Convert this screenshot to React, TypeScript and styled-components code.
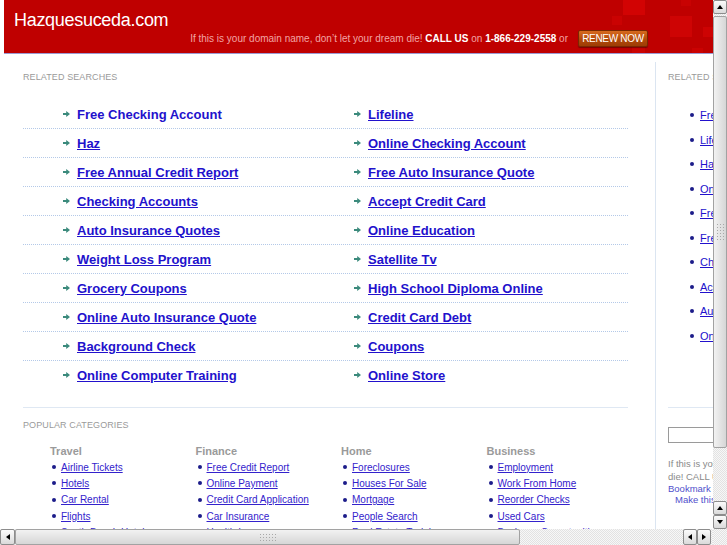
import styled, { createGlobalStyle, css } from 'styled-components';

const GlobalStyle = createGlobalStyle`
  html, body {
    margin: 0;
    padding: 0;
    overflow: hidden;
    background: #fff;
  }
  body {
    font-family: "Liberation Sans", Arial, sans-serif;
  }
`;

const searches = [
  ['Free Checking Account', 'Lifeline'],
  ['Haz', 'Online Checking Account'],
  ['Free Annual Credit Report', 'Free Auto Insurance Quote'],
  ['Checking Accounts', 'Accept Credit Card'],
  ['Auto Insurance Quotes', 'Online Education'],
  ['Weight Loss Program', 'Satellite Tv'],
  ['Grocery Coupons', 'High School Diploma Online'],
  ['Online Auto Insurance Quote', 'Credit Card Debt'],
  ['Background Check', 'Coupons'],
  ['Online Computer Training', 'Online Store'],
];

const sideLinks = [
  'Free Checking Account',
  'Lifeline',
  'Haz',
  'Online Checking Account',
  'Free Annual Credit Report',
  'Free Auto Insurance Quote',
  'Checking Accounts',
  'Accept Credit Card',
  'Auto Insurance Quotes',
  'Online Education',
];

const categories = [
  { title: 'Travel', links: ['Airline Tickets', 'Hotels', 'Car Rental', 'Flights', 'South Beach Hotels'] },
  { title: 'Finance', links: ['Free Credit Report', 'Online Payment', 'Credit Card Application', 'Car Insurance', 'Health Insurance'] },
  { title: 'Home', links: ['Foreclosures', 'Houses For Sale', 'Mortgage', 'People Search', 'Real Estate Training'] },
  { title: 'Business', links: ['Employment', 'Work From Home', 'Reorder Checks', 'Used Cars', 'Business Opportunities'] },
];

const Arrow = () => (
  <svg width="7" height="6" viewBox="0 0 7 6" aria-hidden="true">
    <polygon points="0,2 3.2,2 3.2,0 7,3 3.2,6 3.2,4 0,4" fill="#3b8a7c" />
  </svg>
);

const App = () => (
  <>
    <GlobalStyle />
    <Screen>
      <Page>
        <Header>
          <Decor width="120" height="53" viewBox="0 0 120 53" aria-hidden="true">
            <rect x="30" y="0" width="22" height="15" fill="#d20303" />
            <rect x="19" y="16" width="10" height="9" fill="#ca0202" />
            <rect x="77" y="16" width="22" height="21" fill="#ce0404" />
            <rect x="110" y="27" width="10" height="10" fill="#cd0303" />
            <rect x="39" y="43" width="13" height="10" fill="#ca0303" />
            <rect x="99" y="48" width="11" height="5" fill="#ca0202" />
            <rect x="88" y="0" width="10" height="6" fill="#c80202" />
          </Decor>
          <Title>Hazquesuceda.com</Title>
          <Promo>
            <Tagline>
              If this is your domain name, don’t let your dream die! <b>CALL US</b> on <b>1-866-229-2558</b> or
            </Tagline>
            <Renew>RENEW NOW</Renew>
          </Promo>
        </Header>

        <Body>
          <Main>
            <Heading>Related Searches</Heading>
            <Rows>
              {searches.map((pair, r) => (
                <Row key={pair[0]}>
                  {pair.map((text, c) => (
                    <Cell key={text}>
                      <Arrow />
                      <BigLink $plain={r === 0 && c === 0}>{text}</BigLink>
                    </Cell>
                  ))}
                </Row>
              ))}
            </Rows>
            <Popular>
              <Heading>Popular Categories</Heading>
              <CatGrid>
                {categories.map((cat) => (
                  <div key={cat.title}>
                    <CatTitle>{cat.title}</CatTitle>
                    <CatList>
                      {cat.links.map((l) => (
                        <CatItem key={l}>
                          <Dot />
                          <SmallLink>{l}</SmallLink>
                        </CatItem>
                      ))}
                    </CatList>
                  </div>
                ))}
              </CatGrid>
            </Popular>
          </Main>

          <Separator />

          <Side>
            <Heading>Related Searches</Heading>
            <SideList>
              {sideLinks.map((l) => (
                <SideItem key={l}>
                  <Dot />
                  <SideLink>{l}</SideLink>
                </SideItem>
              ))}
            </SideList>
            <SideRule />
            <SearchBox type="text" />
            <Note>
              If this is your domain name, don’t let your dream
              <br />
              die! CALL US on 1-866-229-2558
            </Note>
            <Bookmark>Bookmark this page</Bookmark>
            <Bookmark $indent>Make this your homepage</Bookmark>
          </Side>
        </Body>
      </Page>

      <VBar>
        <ScrollBtn $dir="up" />
        <VThumb>
          <Grip $vertical />
        </VThumb>
        <Track />
        <ScrollBtn $dir="up" />
        <ScrollBtn $dir="down" />
      </VBar>

      <HBar>
        <ScrollBtn $dir="left" $wide />
        <HThumb>
          <Grip />
        </HThumb>
        <Track />
        <ScrollBtn $dir="left" />
        <ScrollBtn $dir="right" />
      </HBar>

      <Corner />
    </Screen>
  </>
);

const Screen = styled.div`
  display: grid;
  grid-template-columns: 713px 14px;
  grid-template-rows: 529px 16px;
  width: 727px;
  height: 545px;
`;

const Page = styled.div`
  overflow: hidden;
  background: #fff;
  display: flex;
  flex-direction: column;
`;

const Header = styled.header`
  position: relative;
  flex-shrink: 0;
  margin-left: 4px;
  box-sizing: border-box;
  height: 54px;
  padding: 11px 65px 0 10px;
  background: #bf0000;
  border-bottom: 1px solid #9d9ad2;
  display: flex;
  flex-direction: column;
`;

const Decor = styled.svg`
  position: absolute;
  top: 0;
  right: 0;
  pointer-events: none;
`;

const Title = styled.div`
  position: relative;
  color: #fff;
  font-size: 18px;
  letter-spacing: -0.3px;
  line-height: 19px;
`;

const Promo = styled.div`
  position: relative;
  display: flex;
  justify-content: flex-end;
  align-items: center;
  gap: 10px;
  height: 17px;
`;

const Tagline = styled.span`
  font-size: 10px;
  color: #f2a4a4;
  white-space: nowrap;
  b {
    color: #fff;
  }
`;

const Renew = styled.span`
  box-sizing: border-box;
  width: 70px;
  height: 17px;
  display: flex;
  align-items: center;
  justify-content: center;
  font-size: 10px;
  letter-spacing: -0.3px;
  color: #fff;
  background: linear-gradient(#d66a1e, #b24808 60%, #9c3d06);
  border: 1px solid #7a2800;
  border-radius: 2px;
  box-shadow: 0 1px 1px rgba(60, 0, 0, 0.5);
`;

const Body = styled.div`
  flex: 1;
  display: flex;
  align-items: stretch;
`;

const Main = styled.div`
  flex-shrink: 0;
  width: 605px;
  margin-left: 23px;
`;

const Heading = styled.div`
  margin-top: 18px;
  font-size: 9px;
  line-height: 10px;
  letter-spacing: 0.1px;
  color: #9a9a9a;
  text-transform: uppercase;
  white-space: nowrap;
`;

const Rows = styled.div`
  margin-top: 18px;
  padding-bottom: 18px;
`;

const Row = styled.div`
  display: grid;
  grid-template-columns: 291px 1fr;
  align-items: center;
  height: 28px;
  padding-left: 40px;
  border-bottom: 1px dotted #b4c9e8;
  &:last-child {
    border-bottom: none;
  }
`;

const Cell = styled.div`
  display: flex;
  align-items: center;
  gap: 7px;
`;

const BigLink = styled.a<{ $plain?: boolean }>`
  font-size: 13px;
  font-weight: bold;
  color: #2211cc;
  text-decoration: ${({ $plain }) => ($plain ? 'none' : 'underline')};
  white-space: nowrap;
  cursor: pointer;
`;

const Popular = styled.div`
  border-top: 1px solid #dfe8f3;
  & > ${Heading} {
    margin-top: 12px;
  }
`;

const CatGrid = styled.div`
  display: grid;
  grid-template-columns: repeat(4, 145.5px);
  margin-top: 14px;
  padding-left: 27px;
`;

const CatTitle = styled.div`
  font-size: 11px;
  font-weight: bold;
  line-height: 15px;
  color: #9a9a9a;
`;

const CatList = styled.ul`
  list-style: none;
  margin: 0;
  padding: 0 0 0 2px;
`;

const CatItem = styled.li`
  display: flex;
  align-items: center;
  gap: 5px;
  height: 16.3px;
`;

const Dot = styled.span`
  flex-shrink: 0;
  width: 4px;
  height: 4px;
  border-radius: 50%;
  background: #1c1c8a;
`;

const SmallLink = styled.a`
  font-size: 10px;
  color: #3322cc;
  text-decoration: underline;
  white-space: nowrap;
  cursor: pointer;
`;

const Separator = styled.div`
  flex-shrink: 0;
  width: 1px;
  margin: 8px 0 0 27px;
  background: #dbe5f1;
`;

const Side = styled.div`
  flex-shrink: 0;
  width: 190px;
  padding-left: 12px;
`;

const SideList = styled.ul`
  list-style: none;
  margin: 21px 0 0;
  padding: 0 0 0 22px;
`;

const SideItem = styled.li`
  display: flex;
  align-items: center;
  gap: 6px;
  height: 24.5px;
`;

const SideLink = styled.a`
  font-size: 11px;
  color: #2211cc;
  text-decoration: underline;
  white-space: nowrap;
  cursor: pointer;
`;

const SideRule = styled.div`
  margin-top: 59px;
  border-top: 1px solid #dfe8f3;
`;

const SearchBox = styled.input`
  display: block;
  box-sizing: border-box;
  margin: 19px 0 0;
  width: 150px;
  height: 16px;
  border: 1px solid #9a9a9a;
  padding: 0;
`;

const Note = styled.div`
  margin-top: 14px;
  font-size: 9.5px;
  line-height: 13px;
  color: #8a8a8a;
  white-space: nowrap;
`;

const Bookmark = styled.div<{ $indent?: boolean }>`
  font-size: 9.5px;
  line-height: 11px;
  color: #5050cc;
  white-space: nowrap;
  padding-left: ${({ $indent }) => ($indent ? '7px' : '0')};
`;

/* fake browser scrollbars */

const checker = css`
  background: repeating-conic-gradient(#e2e2e2 0 25%, #f7f7f7 0 50%) 0 0 / 2px 2px;
`;

const VBar = styled.div`
  display: flex;
  flex-direction: column;
  ${checker};
`;

const HBar = styled.div`
  display: flex;
  padding-right: 2px;
  ${checker};
`;

const Corner = styled.div`
  ${checker};
`;

const Track = styled.div`
  flex: 1;
`;

type Dir = 'up' | 'down' | 'left' | 'right';

const triangle = (dir: Dir) => {
  switch (dir) {
    case 'up':
      return 'border-width: 0 3.5px 4px 3.5px; border-color: transparent transparent #000 transparent;';
    case 'down':
      return 'border-width: 4px 3.5px 0 3.5px; border-color: #000 transparent transparent transparent;';
    case 'left':
      return 'border-width: 3.5px 4px 3.5px 0; border-color: transparent #000 transparent transparent;';
    default:
      return 'border-width: 3.5px 0 3.5px 4px; border-color: transparent transparent transparent #000;';
  }
};

const ScrollBtn = styled.div<{ $dir: Dir; $wide?: boolean }>`
  flex-shrink: 0;
  box-sizing: border-box;
  width: ${({ $dir, $wide }) => ($dir === 'up' || $dir === 'down' ? '14px' : $wide ? '15px' : '14px')};
  height: ${({ $dir }) => ($dir === 'up' || $dir === 'down' ? '14px' : '16px')};
  display: flex;
  align-items: center;
  justify-content: center;
  background: linear-gradient(#fbfbfb, #dadada);
  border: 1px solid #8c8c8c;
  border-radius: 2px;
  &::after {
    content: '';
    width: 0;
    height: 0;
    border-style: solid;
    ${({ $dir }) => triangle($dir)}
  }
`;

const VThumb = styled.div`
  box-sizing: border-box;
  height: 432px;
  margin-top: 2px;
  display: flex;
  align-items: center;
  justify-content: center;
  background: linear-gradient(90deg, #f2f2f2, #d6d6d6);
  border: 1px solid #a2a2a2;
  border-radius: 2px;
`;

const HThumb = styled.div`
  box-sizing: border-box;
  width: 505px;
  display: flex;
  align-items: center;
  justify-content: center;
  background: linear-gradient(#f2f2f2, #d6d6d6);
  border: 1px solid #a2a2a2;
  border-radius: 2px;
`;

const Grip = styled.div<{ $vertical?: boolean }>`
  width: ${({ $vertical }) => ($vertical ? '8px' : '18px')};
  height: ${({ $vertical }) => ($vertical ? '18px' : '8px')};
  background: radial-gradient(circle, #a8a8a8 0.8px, transparent 1px) 0 0 / 3px 3px;
`;

export default App;
